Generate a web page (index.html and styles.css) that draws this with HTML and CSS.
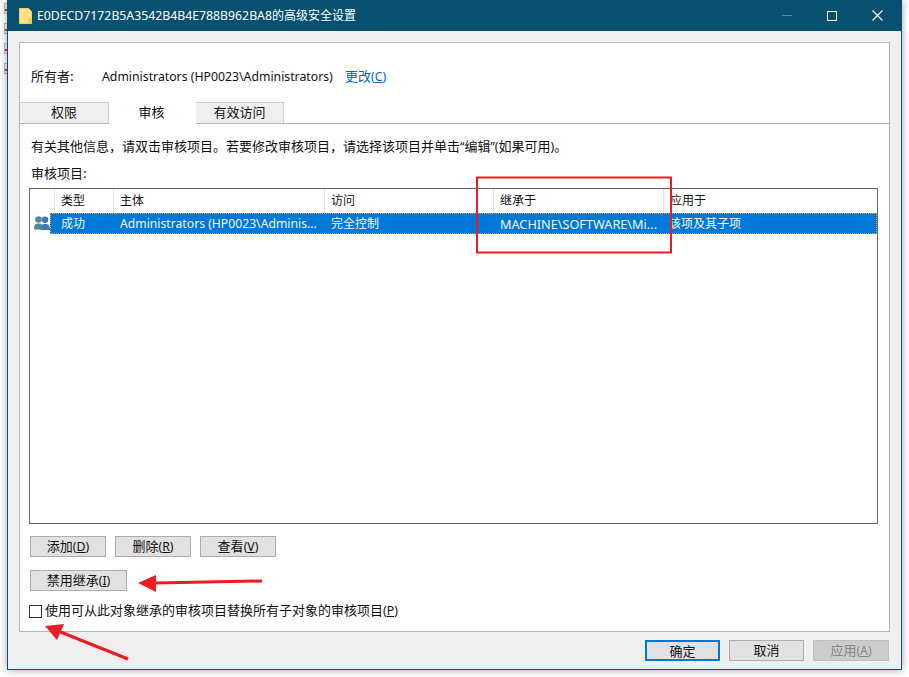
FILE: index.html
```html
<!DOCTYPE html>
<html lang="zh">
<head>
<meta charset="utf-8">
<title>高级安全设置</title>
<link rel="stylesheet" href="styles.css">
</head>
<body>
<div class="desk-marks">
  <i></i><i></i><i></i><i></i>
</div>
<div class="window">
  <header class="titlebar">
    <svg class="folder" width="15" height="18" viewBox="0 0 15 18"><path d="M1.500 1.500h9l3 3v12h-12z" fill="#fde28a" stroke="#f0cf6c"/><path d="M10.500 10.500h3v6h-3z" fill="#f5c94f"/></svg>
    <span class="title"><span class="lat">E0DECD7172B5A3542B4B4E788B962BA8</span>的高级安全设置</span>
    <div class="controls">
      <span class="ctl min"></span>
      <span class="ctl max"></span>
      <svg class="ctl close" width="11" height="11" viewBox="0 0 11 11"><path d="M.5.5l10 10M10.500.5l-10 10" stroke="#fff" stroke-width="1.100"/></svg>
    </div>
  </header>
  <main class="panel">
    <div class="owner">
      <span class="owner-label">所有者:</span>
      <span class="owner-name lat">Administrators (HP0023\Administrators)</span>
      <a class="link">更改<span class="lat">(<u>C</u>)</span></a>
    </div>
    <div class="tabs">
      <span class="tab t1">权限</span>
      <span class="tab t2 active">审核</span>
      <span class="tab t3">有效访问</span>
    </div>
    <section class="tab-body">
      <p class="info">有关其他信息，请双击审核项目。若要修改审核项目，请选择该项目并单击<span class="lat">“</span>编辑<span class="lat">”(</span>如果可用<span class="lat">)</span>。</p>
      <p class="list-label">审核项目:</p>
      <div class="table">
        <div class="thead">
          <span class="c0"></span><span class="c1">类型</span><span class="c2">主体</span><span class="c3">访问</span><span class="c4">继承于</span><span class="c5">应用于</span>
        </div>
        <div class="row-wrap">
          <svg class="users" width="16" height="14" viewBox="0 0 16 14"><circle cx="4.500" cy="3.500" r="3.300" fill="#4f8f8a"/><path d="M0 13.500c0-5 1.500-6 4.500-6s4.500 1 4.500 6z" fill="#4f8f8a"/><circle cx="11" cy="3.800" r="3.300" fill="#3a78b8"/><path d="M6.500 14c0-5 1.500-6 4.500-6s5 1 5 6z" fill="#3a78b8"/></svg>
          <div class="row">
            <span class="d1">成功</span><span class="d2">Administrators (HP0023\Adminis...</span><span class="d3">完全控制</span><span class="d4">MACHINE\SOFTWARE\Mi...</span><span class="d5">该项及其子项</span>
          </div>
        </div>
      </div>
      <div class="btn-row">
        <button class="btn">添加<span class="lat">(<u>D</u>)</span></button>
        <button class="btn">删除<span class="lat">(<u>R</u>)</span></button>
        <button class="btn">查看<span class="lat">(<u>V</u>)</span></button>
      </div>
      <button class="btn wide">禁用继承<span class="lat">(<u>I</u>)</span></button>
      <label class="check"><span class="box"></span><span class="check-text">使用可从此对象继承的审核项目替换所有子对象的审核项目<span class="lat">(<u>P</u>)</span></span></label>
    </section>
  </main>
  <footer class="footer">
    <button class="btn primary">确定</button>
    <button class="btn narrow">取消</button>
    <button class="btn disabled">应用<span class="lat">(<u>A</u>)</span></button>
  </footer>
</div>
<svg class="notes" width="909" height="677" viewBox="0 0 909 677">
  <rect x="477" y="177.500" width="194" height="75" fill="none" stroke="#ed1c24" stroke-width="2"/>
  <path d="M262 581L155 583" stroke="#ed1c24" stroke-width="3" fill="none"/>
  <path d="M138 583L156 575L156 592z" fill="#ed1c24"/>
  <path d="M128 659L58 631" stroke="#ed1c24" stroke-width="3" fill="none"/>
  <path d="M45 626L64 624L57 640z" fill="#ed1c24"/>
</svg>
</body>
</html>
```
FILE: styles.css
```css
* { box-sizing: border-box; }
html, body { margin: 0; padding: 0; }
body {
  width: 909px; height: 677px; overflow: hidden; position: relative;
  background: #fff;
  font: 13px/16px "Noto Sans CJK SC", "Noto Sans", sans-serif;
  color: #111;
}
.lat { font-family: "Noto Sans", "Noto Sans CJK SC", sans-serif; font-size: 12.270px; }
.desk-marks { position: absolute; left: 4px; top: 3px; width: 3px; }
.desk-marks i { display: block; position: relative; height: 11px; margin-bottom: 9px; border: 1px solid #bbb; border-right: 0; background: #f4f4f4; }
.desk-marks i::after { content: ""; position: absolute; right: 0; top: 5px; width: 2px; height: 2px; background: #c8402f; }
.window {
  position: absolute; left: 7px; top: 0; width: 895px; height: 670px;
  background: #efefef;
  border: 1px solid #0b5070; border-top: 0;
  box-shadow: 0 0 8px rgba(0,0,0,.35);
  display: flex; flex-direction: column;
}
.titlebar {
  height: 31px; flex: none; background: #07506f; color: #fff;
  margin: 0 -1px; display: flex; align-items: center; padding-left: 11px;
}
.folder { flex: none; }
.title { margin-left: 4px; font-size: 12px; white-space: nowrap; }
.controls { margin-left: auto; display: flex; align-items: center; }
.ctl { display: block; flex: none; }
.min { width: 10px; height: 1px; background: #5b8aa0; margin-right: 35px; }
.max { width: 10px; height: 10px; border: 1px solid #fff; margin-right: 35px; }
.close { margin-right: 19px; }
.panel {
  margin: 11px 11px 0; height: 590px; flex: none;
  background: #fff; border: 1px solid #b4b4b4;
  display: flex; flex-direction: column;
}
.owner { height: 59px; flex: none; padding: 25px 11px 0; display: flex; }
.owner-label { width: 71px; }
.owner-name { width: 243px; white-space: nowrap; padding-top: 1px; }
.link { color: #0066cc; }
.tabs { height: 21px; flex: none; display: flex; position: relative; z-index: 1; }
.tab {
  background: #efefef; border: 1px solid #cfcfcf; border-bottom: 0;
  text-align: center; line-height: 17px; height: 21px;
}
.t1 { width: 89px; border-left: 0; }
.t2 { width: 87px; background: #fff; border-color: #fff; height: 22px; padding-right: 2px; }
.t3 { width: 88px; border-left: 0; }
.tab-body {
  flex: 1; border-top: 1px solid #b4b4b4;
  padding: 0 11px 0 9px;
}
.tab-body p { margin: 0; white-space: nowrap; }
.info { padding: 14px 0 0 2px; height: 41px; }
.list-label { padding-left: 2px; height: 23px; }
.table { width: 849px; height: 336px; border: 1px solid #646464; background: #fff; font-size: 12px; }
.thead { display: flex; height: 24px; }
.thead span { flex: none; height: 24px; border-right: 1px solid #e3e3e3; padding-left: 6px; line-height: 22px; }
.c0 { width: 25px; }
.c1 { width: 59px; }
.c2 { width: 211px; }
.c3 { width: 169px; }
.c4 { width: 170px; }
.thead .c5 { border-right: 0; }
.row-wrap { position: relative; height: 21px; padding-left: 20px; }
.users { position: absolute; left: 4px; top: 3px; }
.row {
  display: flex; height: 21px; line-height: 20px; background: #0078d7; color: #f2f8fd;
  outline: 1px dotted #e9a25a; outline-offset: -1px; white-space: nowrap;
}
.row span { flex: none; padding-left: 10px; }
.row .d1 { width: 60px; padding-left: 11px; }
.row .d2 { width: 211px; padding-top: 1px; font-family: "Noto Sans", sans-serif; font-size: 12.200px; }
.d3 { width: 169px; }
.row .d4 { width: 170px; padding-top: 1px; font-family: "Noto Sans", sans-serif; font-size: 12.700px; }
.row .d5 { padding-left: 9px; }
.btn {
  display: block; width: 76px; height: 21px; padding: 0;
  background: #e1e1e1; border: 1px solid #adadad; color: #111;
  font: inherit; line-height: 18px; text-align: center;
}
.btn-row { display: flex; gap: 9px; margin: 12px 0 0 1px; }
.wide { width: 97px; margin: 13px 0 0 1px; }
.check { display: flex; align-items: center; margin-top: 12px; height: 17px; white-space: nowrap; }
.check-text { line-height: 14px; margin-top: -3px; }
.box { width: 13px; height: 13px; border: 1px solid #333; background: #fff; margin-right: 3px; flex: none; }
.footer { flex: 1; display: flex; gap: 9px; justify-content: flex-end; padding: 8px 12px 0 0; }
.footer .btn { padding-bottom: 2px; }
.primary { width: 75px; border: 2px solid #0078d7; line-height: 17px; }
.narrow { width: 75px; }
.disabled { background: #ccc; border-color: #bfbfbf; color: #888; }
.notes { position: absolute; left: 0; top: 0; pointer-events: none; }
```
